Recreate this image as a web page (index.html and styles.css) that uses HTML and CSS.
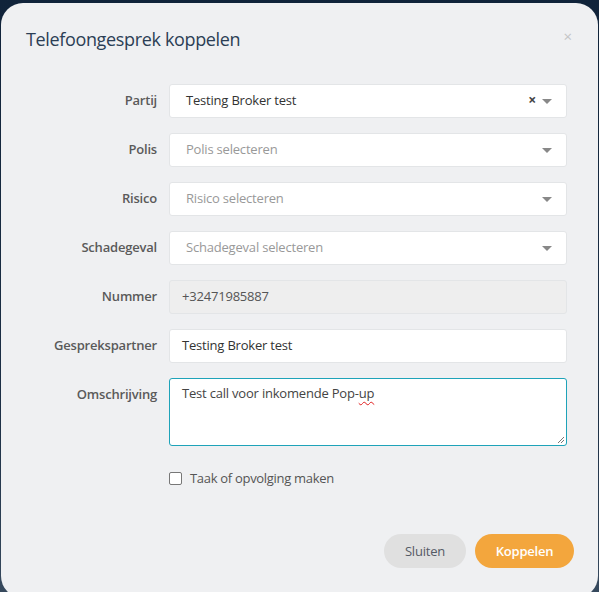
FILE: index.html
```html
<!DOCTYPE html>
<html lang="nl">
<head>
<meta charset="utf-8">
<title>Telefoongesprek koppelen</title>
<link rel="stylesheet" href="styles.css">
</head>
<body>
<div class="modal">
  <div class="modal-header">
    <h2 class="modal-title">Telefoongesprek koppelen</h2>
    <span class="modal-close">&times;</span>
  </div>
  <form class="form">
    <label class="label">Partij</label>
    <div class="select">
      <span class="select-value">Testing Broker test</span>
      <span class="select-clear">&times;</span>
      <span class="caret"></span>
    </div>

    <label class="label">Polis</label>
    <div class="select">
      <span class="select-placeholder">Polis selecteren</span>
      <span class="caret"></span>
    </div>

    <label class="label">Risico</label>
    <div class="select">
      <span class="select-placeholder">Risico selecteren</span>
      <span class="caret"></span>
    </div>

    <label class="label">Schadegeval</label>
    <div class="select">
      <span class="select-placeholder">Schadegeval selecteren</span>
      <span class="caret"></span>
    </div>

    <label class="label">Nummer</label>
    <div class="input input-disabled">+32471985887</div>

    <label class="label">Gesprekspartner</label>
    <div class="input">Testing Broker test</div>

    <label class="label">Omschrijving</label>
    <div class="textarea">Test call voor inkomende Pop-<span class="spell">up</span>
      <svg class="grip" width="8" height="8" viewBox="0 0 8 8"><path d="M7 1L1 7M7 4L4 7" stroke="#777" stroke-width="1"/></svg>
    </div>

    <div class="check-row">
      <span class="checkbox"></span>
      <span class="check-label">Taak of opvolging maken</span>
    </div>
  </form>
  <div class="modal-footer">
    <button type="button" class="btn btn-secondary">Sluiten</button>
    <button type="button" class="btn btn-primary">Koppelen</button>
  </div>
</div>
</body>
</html>
```
FILE: styles.css
```css
html, body {
  margin: 0;
  padding: 0;
  height: 100%;
}
body {
  background: linear-gradient(180deg, #10233a 0%, #1d3046 70%, #36495d 100%);
  font-family: "Open Sans", "Noto Sans", sans-serif;
  overflow: hidden;
}
.modal {
  margin: 3px 1px 0 1px;
  height: 595px;
  background: #eff0f2;
  border-radius: 22px;
  box-sizing: border-box;
}
.modal-header {
  position: relative;
  padding: 24px 25px 0 25px;
}
.modal-title {
  margin: 0;
  font-size: 18px;
  line-height: 24px;
  font-weight: 500;
  color: #2b3e55;
  letter-spacing: -0.35px;
}
.modal-close {
  position: absolute;
  right: 26px;
  top: 24px;
  font-size: 15px;
  line-height: 18px;
  color: #c3c4c6;
}
.form {
  margin-top: 33px;
  display: grid;
  grid-template-columns: 156px 398px;
  column-gap: 12px;
  row-gap: 15px;
  font-size: 13px;
}
.label {
  text-align: right;
  font-weight: 600;
  color: #5a5a5a;
  padding-top: 7px;
  line-height: 18px;
  letter-spacing: -0.2px;
}
.select, .input {
  height: 34px;
  box-sizing: border-box;
  background: #fff;
  border: 1px solid #e3e5e7;
  border-radius: 3px;
  display: flex;
  align-items: center;
  color: #333;
  letter-spacing: -0.2px;
}
.select {
  padding: 0 14px 3px 16px;
}
.input {
  padding: 0 12px 2px 12px;
}
.input-disabled {
  background: #eeeeee;
  color: #555;
}
.select-value {
  flex: 1;
  color: #333;
}
.select-placeholder {
  flex: 1;
  color: #999;
}
.select-clear {
  font-size: 14px;
  font-weight: 700;
  color: #444;
  margin-right: 6px;
  line-height: 1;
}
.caret {
  width: 0;
  height: 0;
  border-left: 5px solid transparent;
  border-right: 5px solid transparent;
  border-top: 5px solid #888;
  margin-top: 3px;
}
.textarea {
  position: relative;
  height: 68px;
  box-sizing: border-box;
  background: #fff;
  border: 1px solid #1ea3b9;
  border-radius: 3px;
  padding: 5px 12px;
  color: #444;
  line-height: 18px;
  letter-spacing: -0.2px;
}
.spell {
  text-decoration: underline wavy #e02020;
  text-decoration-thickness: 1px;
  text-underline-offset: 3px;
}
.grip {
  position: absolute;
  right: 1px;
  bottom: 1px;
}
.check-row {
  grid-column: 2;
  margin-top: 7px;
  display: flex;
  align-items: center;
  line-height: 20px;
}
.checkbox {
  width: 11px;
  height: 11px;
  border: 1px solid #777;
  border-radius: 2px;
  background: #fff;
  margin-right: 8px;
}
.check-label {
  color: #555;
  letter-spacing: -0.3px;
}
.modal-footer {
  margin-top: 46px;
  display: flex;
  justify-content: flex-end;
  gap: 9px;
  padding-right: 24px;
}
.btn {
  height: 34px;
  border: none;
  border-radius: 17px;
  font-family: inherit;
  font-size: 13px;
  letter-spacing: -0.2px;
}
.btn-secondary {
  width: 82px;
  background: #e0e0e0;
  color: #555b66;
}
.btn-primary {
  width: 99px;
  background: #f3a63d;
  color: #fff;
  font-weight: 600;
}
```
